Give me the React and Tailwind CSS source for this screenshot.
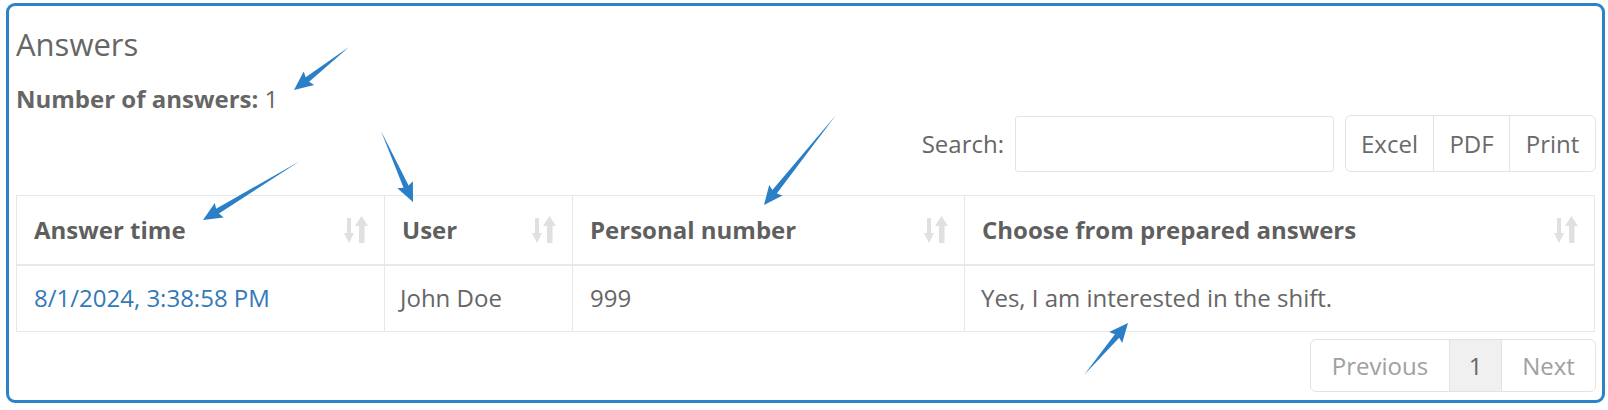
import React from "react";

const arrows = [
  { from: [349, 47], to: [294, 90] },
  { from: [300, 161], to: [203, 220] },
  { from: [381, 131], to: [413, 202] },
  { from: [836, 115], to: [764, 205] },
  { from: [1084, 375], to: [1128, 323] },
];

const arrowPoints = ({ from, to }) => {
  const dx = to[0] - from[0];
  const dy = to[1] - from[1];
  const len = Math.hypot(dx, dy);
  const ux = dx / len;
  const uy = dy / len;
  const nx = -uy;
  const ny = ux;
  const headLen = 17;
  const bx = to[0] - ux * headLen;
  const by = to[1] - uy * headLen;
  const pt = (x, y) => `${x.toFixed(1)},${y.toFixed(1)}`;
  return [
    pt(from[0], from[1]),
    pt(bx + nx * 2.8, by + ny * 2.8),
    pt(bx + nx * 8.5 - ux * 2, by + ny * 8.5 - uy * 2),
    pt(to[0], to[1]),
    pt(bx - nx * 8.5 - ux * 2, by - ny * 8.5 - uy * 2),
    pt(bx - nx * 2.8, by - ny * 2.8),
  ].join(" ");
};

const SortIcon = () => (
  <svg width="24" height="28" viewBox="0 0 24 28" className="shrink-0">
    <g fill="#e0e0e0">
      <rect x="3" y="2" width="4" height="17" />
      <polygon points="0,17 10,17 5,27" />
      <polygon points="11,10 24,10 17.5,0" />
      <rect x="15" y="8" width="5.5" height="19" />
    </g>
  </svg>
);

const columns = [
  { label: "Answer time", width: "w-[368px]" },
  { label: "User", width: "w-[188px]" },
  { label: "Personal number", width: "w-[392px]" },
  { label: "Choose from prepared answers", width: "w-[630px]" },
];

const App = () => {
  return (
    <div
      className="relative h-[410px] w-[1608px] overflow-hidden bg-white pl-[6px] pt-[3px] text-[24px] text-[#666]"
      style={{ fontFamily: '"Open Sans", "Liberation Sans", sans-serif' }}
    >
      <div className="h-[400px] w-[1599px] rounded-[9px] border-[3px] border-[#2d83c8] pl-[7px] pr-[6px]">
        <h4 className="mt-[21px] text-[31px] font-medium leading-[34px] text-[#666]">
          Answers
        </h4>
        <p className="mt-[22px] leading-[32px] text-[#666]">
          <span className="font-bold">Number of answers:</span> 1
        </p>
        <div className="flex items-center justify-end">
          <label className="mr-[11px] text-[#666]">Search:</label>
          <input
            type="text"
            className="h-[56px] w-[319px] rounded-[3px] border border-[#e3e3e3] bg-white outline-none"
          />
          <div className="ml-[11px] flex h-[57px] rounded-[6px] border border-[#e3e3e3] text-[#6a6a6a]">
            <button className="w-[88px] border-r border-[#e3e3e3]">Excel</button>
            <button className="w-[76px] border-r border-[#e3e3e3]">PDF</button>
            <button className="w-[85px]">Print</button>
          </div>
        </div>
        <table className="mt-[23px] w-[1578px] table-fixed border-collapse">
          <thead>
            <tr>
              {columns.map((col) => (
                <th
                  key={col.label}
                  className={`${col.width} h-[69px] border border-b-2 border-[#e8e8e8] pl-[17px] pr-[16px] text-left font-bold text-[#5f5f5f]`}
                >
                  <div className="flex items-center justify-between">
                    <span>{col.label}</span>
                    <SortIcon />
                  </div>
                </th>
              ))}
            </tr>
          </thead>
          <tbody>
            <tr>
              <td className="h-[67px] border border-[#e8e8e8] pl-[17px] text-[#337ab7]">
                8/1/2024, 3:38:58 PM
              </td>
              <td className="border border-[#e8e8e8] pl-[15px]">John Doe</td>
              <td className="border border-[#e8e8e8] pl-[17px]">999</td>
              <td className="border border-[#e8e8e8] pl-[16px]">
                Yes, I am interested in the shift.
              </td>
            </tr>
          </tbody>
        </table>
        <div className="mt-[7px] flex justify-end">
          <div className="flex h-[53px] overflow-hidden rounded-[6px] border border-[#e3e3e3]">
            <span className="flex w-[138px] items-center justify-center text-[#a0a0a0]">
              Previous
            </span>
            <span className="flex w-[53px] items-center justify-center border-x border-[#e3e3e3] bg-[#f0f0f0] text-[#666]">
              1
            </span>
            <span className="flex w-[93px] items-center justify-center text-[#a0a0a0]">
              Next
            </span>
          </div>
        </div>
      </div>
      <svg
        className="pointer-events-none absolute left-0 top-0"
        width="1608"
        height="410"
      >
        {arrows.map((a, i) => (
          <polygon key={i} points={arrowPoints(a)} fill="#2b7fc6" />
        ))}
      </svg>
    </div>
  );
};

export default App;
